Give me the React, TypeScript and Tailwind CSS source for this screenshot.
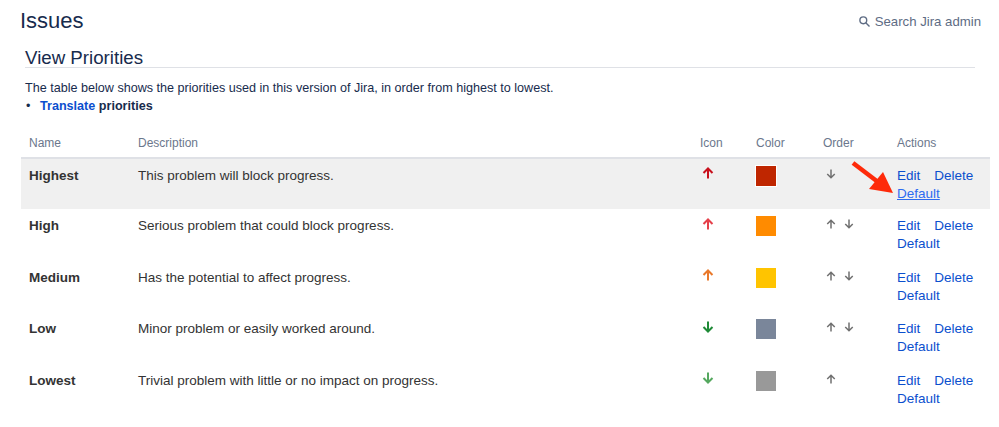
import React from 'react';

const priorities = [
  { name: 'Highest', description: 'This problem will block progress.', up: true, arrow: '#c8101c', color: '#bf2600', order: ['down'], active: true },
  { name: 'High', description: 'Serious problem that could block progress.', up: true, arrow: '#e5404a', color: '#ff8b00', order: ['up', 'down'] },
  { name: 'Medium', description: 'Has the potential to affect progress.', up: true, arrow: '#e9792b', color: '#ffc400', order: ['up', 'down'] },
  { name: 'Low', description: 'Minor problem or easily worked around.', up: false, arrow: '#1f8a37', color: '#7a869a', order: ['up', 'down'] },
  { name: 'Lowest', description: 'Trivial problem with little or no impact on progress.', up: false, arrow: '#55a85f', color: '#999999', order: ['up'] },
];

const Arrow = ({ up, color, size = 12, width = 2 }: { up: boolean; color: string; size?: number; width?: number }) => (
  <svg width={size} height={size} viewBox="0 0 12 12" fill="none" stroke={color} strokeWidth={width}>
    {up ? <path d="M6 11.5V1.5M1.5 6L6 1.5L10.5 6" /> : <path d="M6 .5V10.5M1.5 6L6 10.5L10.5 6" />}
  </svg>
);

const Link = ({ children, active }: { children: React.ReactNode; active?: boolean }) => (
  <a className={active ? 'text-[#2d6cf0] underline' : 'text-[#0b4fce]'}>{children}</a>
);

export default function App() {
  return (
    <div className="relative h-[427px] w-[999px] overflow-hidden bg-white font-['Liberation_Sans',sans-serif] text-[13.5px] text-[#333333]">
      <header className="flex h-[42px] items-center justify-between pl-[20px] pr-[18px]">
        <h1 className="mb-[2px] text-[22px] text-[#172b4d]">Issues</h1>
        <div className="mt-[2px] flex items-center gap-[5px] text-[13.2px] text-[#5e6c84]">
          <svg width="11" height="11" viewBox="0 0 11 11" fill="none" stroke="#5e6c84" strokeWidth="1.4">
            <circle cx="4.3" cy="4.3" r="3.4" />
            <path d="M6.8 6.8L10.5 10.5" />
          </svg>
          Search Jira admin
        </div>
      </header>

      <main className="pl-[21px] pr-[9px]">
        <div className="mr-[15px] ml-[4px] mt-[4px] border-b border-[#dfe1e6]">
          <h2 className="h-[21px] text-[18.7px] leading-[23px] text-[#172b4d]">View Priorities</h2>
        </div>
        <p className="ml-[4px] mt-[11px] text-[12.6px] leading-[18px] text-[#172b4d]">The table below shows the priorities used in this version of Jira, in order from highest to lowest.</p>
        <ul className="ml-[4px] text-[12.6px] leading-[18px] text-[#172b4d]">
          <li className="flex font-bold">
            <span className="w-[15px] pl-[1px] font-normal">•</span>
            <a className="text-[#0b4fce]">Translate</a>&nbsp;priorities
          </li>
        </ul>

        <table className="mt-[14.5px] w-[969px] table-fixed border-collapse">
          <thead>
            <tr className="h-[28px] border-b-2 border-[#dfe1e6] text-left text-[12px] text-[#6b778c]">
              <th className="w-[109px] pb-[1px] pl-[8px] font-normal">Name</th>
              <th className="w-[562px] pb-[1px] pl-[8px] font-normal">Description</th>
              <th className="w-[56px] pb-[1px] pl-[8px] font-normal">Icon</th>
              <th className="w-[67px] pb-[1px] pl-[8px] font-normal">Color</th>
              <th className="w-[74px] pb-[1px] pl-[8px] font-normal">Order</th>
              <th className="pb-[1px] pl-[8px] font-normal">Actions</th>
            </tr>
          </thead>
          <tbody>
            {priorities.map((p) => (
              <tr key={p.name} className={`h-[51.5px] align-top ${p.active ? 'bg-[#f0f0f0]' : ''}`}>
                <td className="pl-[8px] pt-[8px] font-bold leading-[18px]">{p.name}</td>
                <td className="pl-[8px] pt-[8px] leading-[18px]">{p.description}</td>
                <td className="pl-[10px] pt-[8.5px]">
                  <Arrow up={p.up} color={p.arrow} />
                </td>
                <td className="pl-[7px] pt-[6px]">
                  <div className="h-[22px] w-[22px] border border-white" style={{ backgroundColor: p.color }} />
                </td>
                <td className="pl-[11px] pt-[10px]">
                  <div className="flex gap-[8px]">
                    {p.order.map((dir) => (
                      <Arrow key={dir} up={dir === 'up'} color="#707070" size={10} width={1.8} />
                    ))}
                  </div>
                </td>
                <td className="pl-[8px] pt-[8px] leading-[18px]">
                  <div className="flex gap-[14px]">
                    <Link>Edit</Link>
                    <Link>Delete</Link>
                  </div>
                  <Link active={p.active}>Default</Link>
                </td>
              </tr>
            ))}
          </tbody>
        </table>
      </main>

      <svg className="absolute left-[849px] top-[160px]" width="48" height="36" viewBox="0 0 48 36">
        <path d="M4 3L29 22" stroke="#fe2a0a" strokeWidth="4.5" fill="none" />
        <path d="M44 33L20 29L34 12Z" fill="#fe2a0a" />
      </svg>
    </div>
  );
}
